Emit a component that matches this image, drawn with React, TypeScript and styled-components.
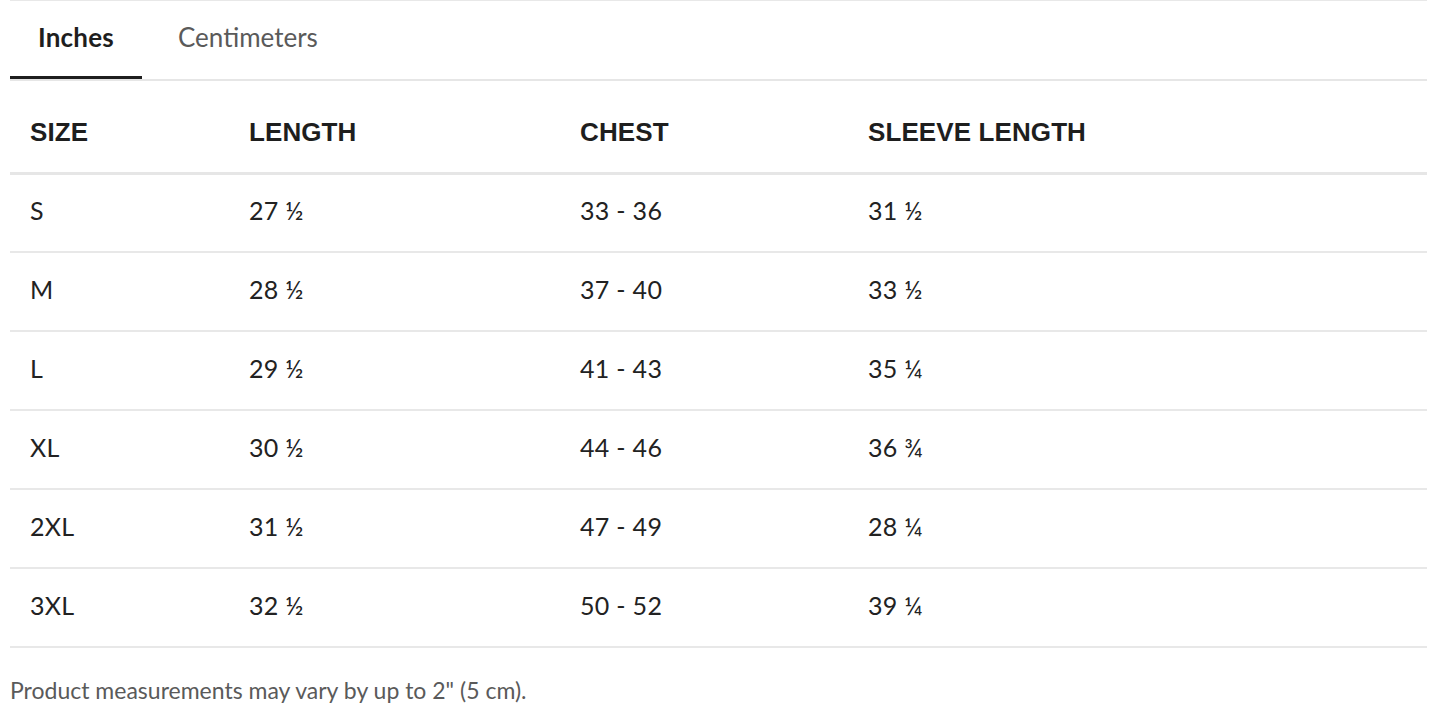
import React from "react";
import styled, { createGlobalStyle } from "styled-components";

const Global = createGlobalStyle`
  html, body { margin: 0; padding: 0; background: #fff; }
  body { font-family: "Lato", "Liberation Sans", sans-serif; color: #222; }
`;

const Wrapper = styled.div`
  margin-left: 10px;
  width: 1417px;
  border-top: 1px solid #e8e8e8;
`;

const TabBar = styled.div`
  display: flex;
  gap: 9px;
  height: 79px;
  border-bottom: 2px solid #e6e6e6;
  margin-top: -1px;
`;

const Tab = styled.div<{ $active?: boolean }>`
  display: flex;
  align-items: center;
  justify-content: center;
  padding: 0 27px 2px;
  height: 100%;
  box-sizing: border-box;
  font-size: 26px;
  letter-spacing: ${(p) => (p.$active ? "0.2px" : "0")};
  font-weight: ${(p) => (p.$active ? 700 : 400)};
  color: ${(p) => (p.$active ? "#1e1e1e" : "#5a5a5a")};
  border-bottom: 3px solid ${(p) => (p.$active ? "#1e1e1e" : "transparent")};
  margin-bottom: -2px;
  width: ${(p) => (p.$active ? "132px" : "auto")};
`;

const Table = styled.table`
  width: 100%;
  border-collapse: collapse;
  table-layout: fixed;
`;

const HeadCell = styled.th<{ $w: number }>`
  width: ${(p) => p.$w}px;
  text-align: left;
  height: 92px;
  padding: 13px 0 0 20px;
  font-family: "Liberation Sans", Arial, sans-serif;
  font-weight: 700;
  font-size: 26px;
  letter-spacing: 0.1px;
  color: #1e1e1e;
  border-bottom: 3px solid #e6e6e6;
  box-sizing: border-box;
`;

const Row = styled.tr`
  border-bottom: 2px solid #e8e8e8;
`;

const Cell = styled.td`
  height: 79px;
  box-sizing: border-box;
  padding: 0 0 5px 20px;
  font-size: 25px;
  line-height: 30px;
  letter-spacing: 0.3px;
  color: #222;
  vertical-align: middle;
`;

const Note = styled.p`
  margin: 28px 0 0 0;
  font-size: 23px;
  line-height: 28px;
  color: #5a5a5a;
`;

const columns = [
  { label: "SIZE", w: 219 },
  { label: "LENGTH", w: 331 },
  { label: "CHEST", w: 288 },
  { label: "SLEEVE LENGTH", w: 579 },
];

const rows = [
  ["S", "27 ½", "33 - 36", "31 ½"],
  ["M", "28 ½", "37 - 40", "33 ½"],
  ["L", "29 ½", "41 - 43", "35 ¼"],
  ["XL", "30 ½", "44 - 46", "36 ¾"],
  ["2XL", "31 ½", "47 - 49", "28 ¼"],
  ["3XL", "32 ½", "50 - 52", "39 ¼"],
];

export default function App() {
  return (
    <>
      <Global />
      <Wrapper>
        <TabBar>
          <Tab $active>Inches</Tab>
          <Tab>Centimeters</Tab>
        </TabBar>
        <Table>
          <thead>
            <tr>
              {columns.map((c) => (
                <HeadCell key={c.label} $w={c.w}>
                  {c.label}
                </HeadCell>
              ))}
            </tr>
          </thead>
          <tbody>
            {rows.map((r) => (
              <Row key={r[0]}>
                {r.map((v, i) => (
                  <Cell key={i}>{v}</Cell>
                ))}
              </Row>
            ))}
          </tbody>
        </Table>
        <Note>Product measurements may vary by up to 2" (5 cm).</Note>
      </Wrapper>
    </>
  );
}
